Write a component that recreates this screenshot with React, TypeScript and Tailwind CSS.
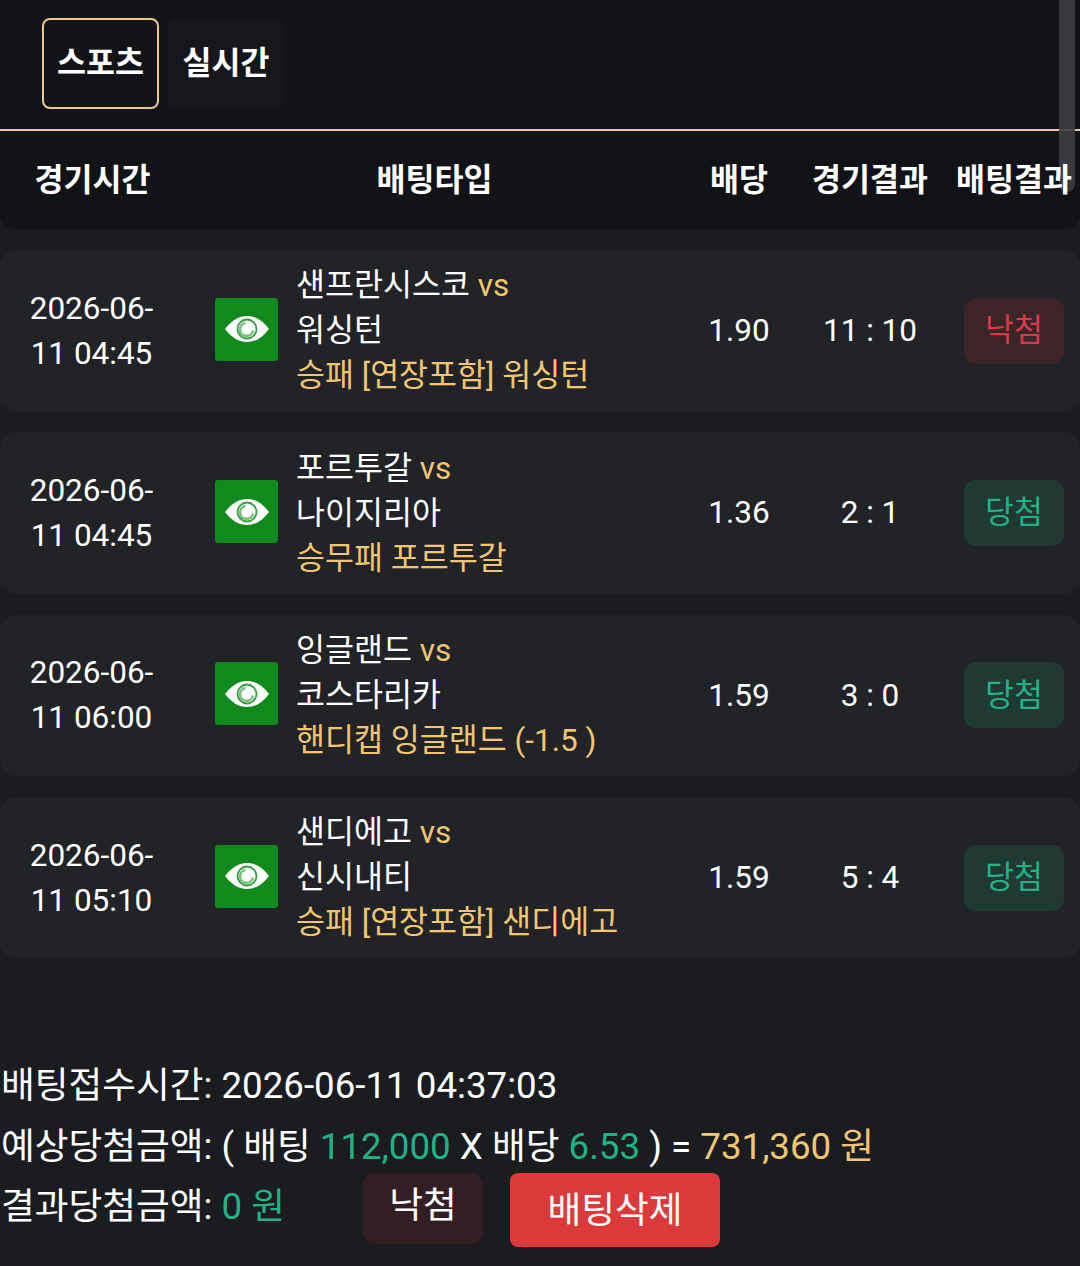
const rows = [
  { date: "2026-06-", time: "11 04:45", home: "샌프란시스코", away: "워싱턴", pick: "승패 [연장포함] 워싱턴", odds: "1.90", score: "11 : 10", won: false },
  { date: "2026-06-", time: "11 04:45", home: "포르투갈", away: "나이지리아", pick: "승무패 포르투갈", odds: "1.36", score: "2 : 1", won: true },
  { date: "2026-06-", time: "11 06:00", home: "잉글랜드", away: "코스타리카", pick: "핸디캡 잉글랜드 (-1.5 )", odds: "1.59", score: "3 : 0", won: true },
  { date: "2026-06-", time: "11 05:10", home: "샌디에고", away: "신시내티", pick: "승패 [연장포함] 샌디에고", odds: "1.59", score: "5 : 4", won: true },
];

function EyeIcon() {
  return (
    <svg width="46" height="28" viewBox="0 0 46 28">
      <path d="M1 14C8 5 15 1 23 1s15 4 22 13c-7 9-14 13-22 13S8 23 1 14z" fill="#fff" />
      <circle cx="23" cy="14" r="9.500" fill="none" stroke="#108a1c" strokeWidth="1.800" opacity="0.85" />
      <path d="M21.500 8a6.500 6.500 0 1 0 7.500 7.500" fill="none" stroke="#108a1c" strokeWidth="2.600" opacity="0.55" />
    </svg>
  );
}

export default function App() {
  return (
    <div className="relative h-[1266px] w-[1080px] overflow-hidden bg-[#1a1c20] text-white [font-family:Roboto,'Noto_Sans_CJK_KR',sans-serif]">
      <div className="absolute right-[5px] top-0 h-[192px] w-[16px] rounded-b-lg bg-[#3c3e42]/90" />
      <div className="rounded-b-2xl bg-[#111317]">
        <div className="flex h-[129px] gap-[9px] pl-[42px] pt-[18px] text-[31.5px] font-bold">
          <div className="flex h-[91px] w-[117px] items-center justify-center rounded-lg border-2 border-[#eac88f]">
            <span>스포츠</span>
          </div>
          <div className="flex h-[91px] w-[116px] items-center justify-center rounded-lg bg-[#15171b]">
            <span>실시간</span>
          </div>
        </div>
        <div className="h-[2px] bg-[#eac88f]" />
        <div className="flex h-[98px] items-center pt-[1px] text-[31.5px] font-bold">
          <div className="w-[185px] text-center">경기시간</div>
          <div className="w-[499px] text-center">배팅타입</div>
          <div className="w-[110px] text-center">배당</div>
          <div className="w-[152px] text-center">경기결과</div>
          <div className="relative z-10 w-[134px] whitespace-nowrap pl-[2px] text-center">배팅결과</div>
        </div>
      </div>

      <div className="flex flex-col gap-[20.75px] pt-[21px]">
        {rows.map((r) => (
          <div key={r.home} className="flex h-[161.5px] items-center rounded-2xl bg-[#212327]">
            <div className="w-[185px] pr-[2px] text-center text-[31.5px] leading-[45px]">
              <div>{r.date}</div>
              <div>{r.time}</div>
            </div>
            <div className="mb-[3px] ml-[30px] flex h-[63px] w-[63px] items-center justify-center rounded-[3px] bg-[#108a1c]">
              <EyeIcon />
            </div>
            <div className="ml-[18px] w-[383px] text-[31.5px] leading-[45px]">
              <div>
                {r.home} <span className="text-[#f0c673]">vs</span>
              </div>
              <div>{r.away}</div>
              <div className="whitespace-nowrap text-[#f0c673]">{r.pick}</div>
            </div>
            <div className="w-[120px] text-center text-[31.5px]">{r.odds}</div>
            <div className="w-[142px] text-center text-[31.5px]">{r.score}</div>
            <div
              className={
                r.won
                  ? "ml-[23px] flex h-[66px] w-[100px] items-center justify-center rounded-xl bg-[#1e3a33] text-[31.5px] text-[#22b184]"
                  : "ml-[23px] flex h-[66px] w-[100px] items-center justify-center rounded-xl bg-[#3c2428] text-[31.5px] text-[#d63b48]"
              }
            >
              {r.won ? "당첨" : "낙첨"}
            </div>
          </div>
        ))}
      </div>

      <div className="pl-[1px] pt-[98px] text-[36.7px]">
        <div className="h-[61px] whitespace-nowrap leading-[60px]">배팅접수시간: 2026-06-11 04:37:03</div>
        <div className="h-[56px] whitespace-nowrap leading-[60px]">
          예상당첨금액: ( 배팅 <span className="text-[#22b184]">112,000</span> X 배당{" "}
          <span className="text-[#22b184]">6.53</span> ) = <span className="text-[#f0c673]">731,360 원</span>
        </div>
        <div className="flex items-start">
          <div className="h-[63px] w-[362px] whitespace-nowrap leading-[67px]">
            결과당첨금액: <span className="text-[#22b184]">0 원</span>
          </div>
          <div className="flex h-[71px] w-[120px] items-center justify-center rounded-xl bg-[#331e24] pb-[6px]">낙첨</div>
          <div className="ml-[27px] flex h-[74px] w-[210px] items-center justify-center rounded-lg bg-[#dc3a3a]">배팅삭제</div>
        </div>
      </div>
    </div>
  );
}
